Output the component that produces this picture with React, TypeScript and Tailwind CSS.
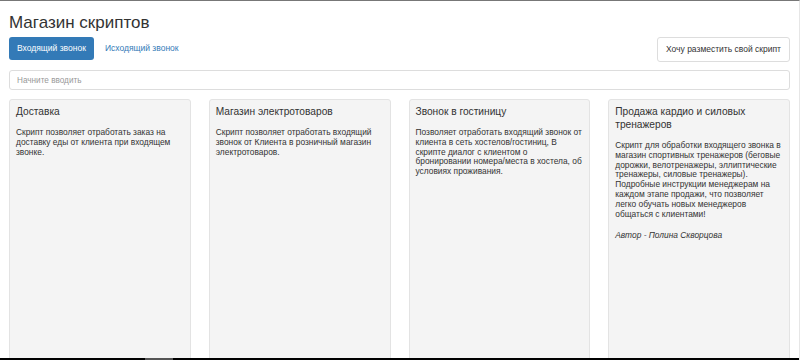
import React from "react";

const scripts = [
  {
    title: "Доставка",
    text: "Скрипт позволяет отработать заказ на доставку еды от клиента при входящем звонке.",
  },
  {
    title: "Магазин электротоваров",
    text: "Скрипт позволяет отработать входящий звонок от Клиента в розничный магазин электротоваров.",
  },
  {
    title: "Звонок в гостиницу",
    text: "Позволяет отработать входящий звонок от клиента в сеть хостелов/гостиниц, В скрипте диалог с клиентом о бронировании номера/места в хостела, об условиях проживания.",
  },
  {
    title: "Продажа кардио и силовых тренажеров",
    text: "Скрипт для обработки входящего звонка в магазин спортивных тренажеров (беговые дорожки, велотренажеры, эллиптические тренажеры, силовые тренажеры). Подробные инструкции менеджерам на каждом этапе продажи, что позволяет легко обучать новых менеджеров общаться с клиентами!",
    author: "Автор - Полина Скворцова",
  },
];

export default function App() {
  return (
    <div className="relative h-[360px] w-[800px] overflow-hidden border-t border-r border-t-[#777] border-r-[#e6e6e6] bg-white font-['Liberation_Sans',Arial,sans-serif] text-[#333]">
      <div className="flex flex-col pl-[9px] pr-[9px]">
        {/* Header */}
        <h2 className="mt-[12px] text-[17px] leading-[20px] font-normal">Магазин скриптов</h2>

        {/* Tabs + action */}
        <div className="mt-[4px] flex items-start justify-between">
          <div className="flex items-center">
            <button className="h-[23px] rounded-[3px] bg-[#337ab7] px-[8px] text-[8.5px] text-white">
              Входящий звонок
            </button>
            <a className="ml-[11px] text-[8.5px] text-[#337ab7]">Исходящий звонок</a>
          </div>
          <button className="h-[25px] rounded-[3px] border border-[#ddd] bg-white px-[8px] text-[8.5px] text-[#333]">
            Хочу разместить свой скрипт
          </button>
        </div>

        {/* Search */}
        <input
          className="mt-[8px] h-[20px] w-full rounded-[3px] border border-[#ddd] px-[7px] text-[8.2px] placeholder:text-[#999] outline-none"
          placeholder="Начните вводить"
        />

        {/* Cards */}
        <div className="mt-[9px] grid grid-cols-4 gap-[18px]">
          {scripts.map((s, i) => (
            <div
              key={i}
              className="h-[300px] rounded-[3px] border border-[#e3e3e3] bg-[#f4f4f4] px-[6px] pt-[5px]"
            >
              <h4 className="text-[10.2px] leading-[13px]">{s.title}</h4>
              <p className="mt-[10px] text-[8.4px] leading-[9.8px]">{s.text}</p>
              {s.author && (
                <p className="mt-[12px] text-[8.4px] leading-[9.8px] italic">{s.author}</p>
              )}
            </div>
          ))}
        </div>
      </div>

      {/* bottom bar */}
      <div className="absolute bottom-0 left-0 h-[2px] w-full bg-black">
        <div className="ml-[145px] h-full w-[28px] bg-[#555]" />
      </div>
    </div>
  );
}
